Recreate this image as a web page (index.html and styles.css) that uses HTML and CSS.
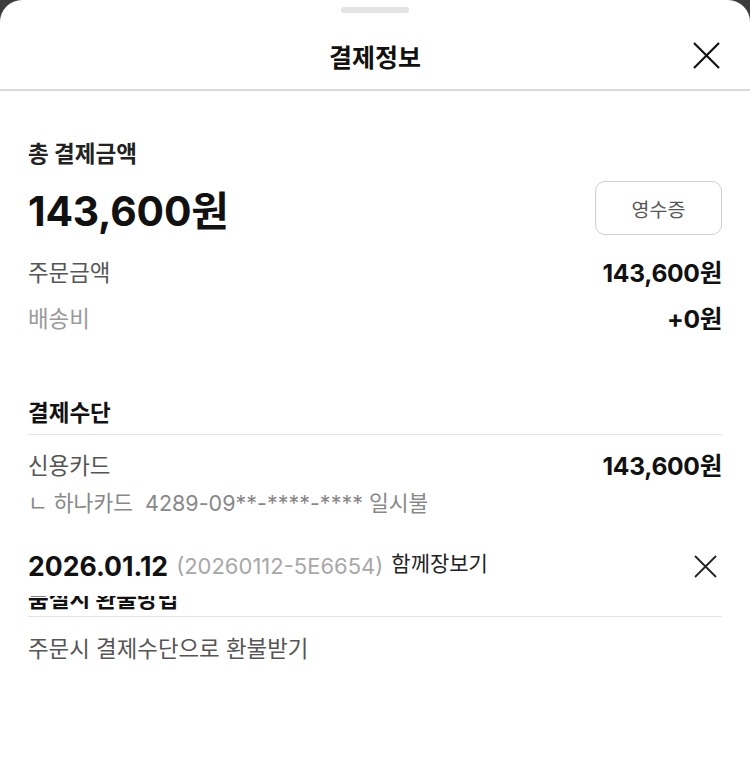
FILE: index.html
```html
<!DOCTYPE html>
<html lang="ko">
<head>
<meta charset="utf-8">
<title>결제정보</title>
<link rel="stylesheet" href="styles.css">
</head>
<body>
<div class="sheet">
  <div class="handle"></div>
  <header class="head">
    <h1 class="title">결제정보</h1>
    <button class="close" aria-label="닫기">
      <svg width="27" height="27" viewBox="0 0 27 27"><path d="M1 1L26 26M26 1L1 26" stroke="#111" stroke-width="2.2" fill="none"/></svg>
    </button>
  </header>

  <section class="total">
    <div class="label">총 결제금액</div>
    <div class="total-row">
      <div class="big">143,600원</div>
      <button class="receipt">영수증</button>
    </div>
    <div class="row first"><span class="k">주문금액</span><b class="v">143,600원</b></div>
    <div class="row light"><span class="k">배송비</span><b class="v">+0원</b></div>
  </section>

  <section class="pay">
    <h2 class="sec">결제수단</h2>
    <div class="row first"><span class="k">신용카드</span><b class="v">143,600원</b></div>
    <div class="card">ㄴ 하나카드&nbsp; 4289-09**-****-**** 일시불</div>
  </section>

  <div class="order-bar">
    <span class="date">2026.01.12</span>
    <span class="ono">(20260112-5E6654)</span>
    <span class="tag">함께장보기</span>
    <button class="close small" aria-label="닫기">
      <svg width="23" height="23" viewBox="0 0 23 23"><path d="M1 1L22 22M22 1L1 22" stroke="#222" stroke-width="1.8" fill="none"/></svg>
    </button>
  </div>

  <section class="refund">
    <h2 class="sec clipped">품절시 환불방법</h2>
    <div class="refund-text">주문시 결제수단으로 환불받기</div>
  </section>
</div>
</body>
</html>
```

FILE: styles.css
```css
* { box-sizing: border-box; }
html, body { margin: 0; padding: 0; }
body {
  background: #3c3c3c;
  font-family: "Inter", "Noto Sans CJK KR", sans-serif;
  color: #111;
}
.sheet {
  background: #fff;
  border-radius: 22px 22px 0 0;
  min-height: 769px;
  padding-top: 7px;
}
.handle {
  width: 68px;
  height: 6px;
  border-radius: 3px;
  background: #e3e3e3;
  margin: 0 auto;
}
.head {
  position: relative;
  height: 78px;
  padding-top: 10px;
  display: flex;
  align-items: center;
  justify-content: center;
  border-bottom: 2px solid #d8dbde;
}
.title {
  margin: 0;
  font-size: 25px;
  font-weight: 700;
  color: #111;
}
.close {
  border: 0;
  background: none;
  padding: 0;
  display: flex;
  cursor: pointer;
}
.head .close {
  position: absolute;
  right: 30px;
  top: 29px;
}
.total {
  padding: 49px 28px 0;
}
.label {
  font-size: 22.5px;
  font-weight: 700;
  line-height: 28px;
  color: #222;
}
.total-row {
  margin-top: 13px;
  height: 54px;
  display: flex;
  align-items: center;
  justify-content: space-between;
}
.big {
  font-size: 40.8px;
  font-weight: 700;
  color: #111;
  letter-spacing: -0.2px;
}
.receipt {
  width: 127px;
  height: 54px;
  border: 1px solid #cfcfcf;
  border-radius: 10px;
  background: #fff;
  font-family: "Inter", "Noto Sans CJK KR", sans-serif;
  font-size: 19.5px;
  color: #555;
}
.row {
  display: flex;
  justify-content: space-between;
  align-items: center;
  line-height: 28px;
  margin-top: 18px;
}
.row.first { margin-top: 24px; }
.row .k { font-size: 22.4px; color: #555; }
.row .v { font-size: 24.6px; font-weight: 700; color: #111; letter-spacing: -0.3px; }
.row.light .k { color: #9a9a9a; }
.pay {
  padding: 67px 28px 0;
}
.sec {
  margin: 0;
  font-size: 22.5px;
  font-weight: 700;
  line-height: 26px;
  color: #111;
  padding-bottom: 8px;
  border-bottom: 1px solid #e3e3e3;
}
.pay .row.first { margin-top: 17px; }
.card {
  margin-top: 9px;
  font-size: 21.5px;
  line-height: 28px;
  color: #888;
}
.order-bar {
  position: relative;
  z-index: 1;
  background: #fff;
  margin-top: 19px;
  height: 60px;
  padding: 0 33px 0 28px;
  display: flex;
  align-items: center;
}
.date {
  font-size: 26.6px;
  font-weight: 700;
  color: #111;
}
.ono {
  margin-left: 8px;
  font-size: 22px;
  color: #a8a8a8;
}
.tag {
  margin-left: 8px;
  font-size: 21px;
  color: #222;
  position: relative;
  top: -4px;
}
.order-bar .close { margin-left: auto; }
.refund {
  padding: 0 28px;
}
.clipped {
  margin-top: -10px;
  padding-bottom: 4px;
}
.refund-text {
  margin-top: 18px;
  font-size: 22.4px;
  line-height: 28px;
  color: #555;
}
```
